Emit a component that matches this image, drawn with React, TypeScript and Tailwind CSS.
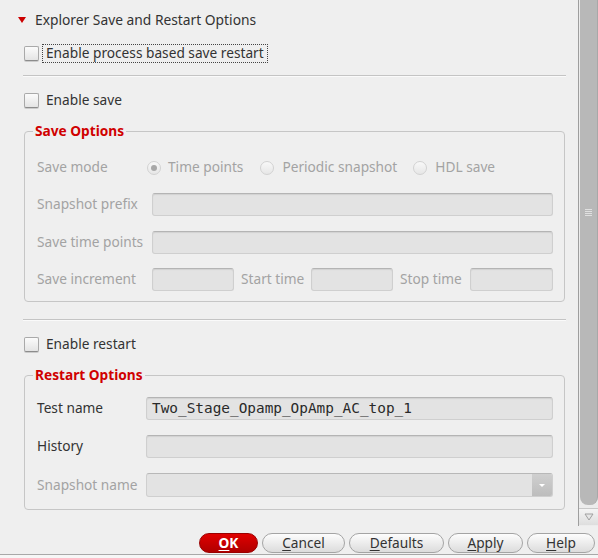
const field =
  "h-[23px] rounded-[3px] bg-[#e3e3e3] border border-[#cfcfcf] border-t-[#b4b4b4] shadow-[inset_0_1px_1px_rgba(0,0,0,0.08)]";

function CheckBox() {
  return (
    <div className="w-[15px] h-[15px] rounded-[2px] border border-[#a9a9a9] border-b-[#8c8c8c] bg-gradient-to-b from-[#fbfbfb] to-[#e4e4e4] shadow-[0_1px_0_rgba(0,0,0,0.15)] shrink-0" />
  );
}

function Radio({ checked }: { checked?: boolean }) {
  return (
    <div className="w-[14px] h-[14px] rounded-full border border-[#d2d2d2] bg-gradient-to-b from-[#f8f8f8] to-[#e6e6e6] flex items-center justify-center shrink-0">
      {checked && <div className="w-[6px] h-[6px] rounded-full bg-[#a8a8a8]" />}
    </div>
  );
}

function Btn({ label, u, primary, w }: { label: string; u: string; primary?: boolean; w: string }) {
  const rest = label.slice(1);
  return (
    <button
      className={
        primary
          ? `${w} h-[20px] rounded-full bg-gradient-to-b from-[#e00000] to-[#b00000] border border-[#9a0000] text-white font-bold text-[13.7px] leading-none`
          : `${w} h-[20px] rounded-full bg-gradient-to-b from-[#fdfdfd] to-[#dcdcdc] border border-[#a4a4a4] text-[#333] text-[13.7px] leading-none`
      }
    >
      <span className="underline underline-offset-2">{u}</span>
      {rest}
    </button>
  );
}

export default function App() {
  return (
    <div className="w-[598px] h-[558px] bg-[#efefef] flex flex-col font-['Noto_Sans',sans-serif] text-[13.7px] text-[#333] overflow-hidden">
      <div className="flex h-[526px]">
        {/* content */}
        <div className="w-[578px] flex flex-col">
          <div className="h-[40px] flex items-center pl-[18px]">
            <div className="w-0 h-0 border-l-[4px] border-r-[4px] border-t-[6px] border-l-transparent border-r-transparent border-t-[#cc0000]" />
            <span className="ml-[9px] text-[13.8px]">Explorer Save and Restart Options</span>
          </div>

          <div className="h-[26px] flex items-center pl-[24px]">
            <CheckBox />
            <span className="ml-[3px] px-[3px] h-[19px] flex items-center border border-dotted border-[#444]">
              Enable process based save restart
            </span>
          </div>

          <div className="mt-[9px] ml-[23px] w-[543px] h-[2px] border-t border-[#c4c4c4] border-b border-b-[#fafafa]" />

          <div className="h-[47px] flex items-center pl-[24px]">
            <CheckBox />
            <span className="ml-[7px]">Enable save</span>
          </div>

          <fieldset className="ml-[24px] w-[541px] border border-[#c6c6c6] rounded-[4px] pl-[12px] pr-[11px] pb-[10px]">
            <legend className="-ml-[4px] px-[2px] h-[14px] text-[#d00000] font-bold leading-[14px]">Save Options</legend>
            <div className="mt-[18px] h-[23px] flex items-center text-[#a3a3a3]">
              <span className="w-[110px]">Save mode</span>
              <Radio checked />
              <span className="ml-[7px]">Time points</span>
              <span className="ml-[17px]"><Radio /></span>
              <span className="ml-[8px]">Periodic snapshot</span>
              <span className="ml-[16px]"><Radio /></span>
              <span className="ml-[8px]">HDL save</span>
            </div>
            <div className="mt-[14px] flex items-center text-[#a3a3a3]">
              <span className="w-[115px]">Snapshot prefix</span>
              <div className={`${field} flex-1`} />
            </div>
            <div className="mt-[15px] flex items-center text-[#a3a3a3]">
              <span className="w-[115px]">Save time points</span>
              <div className={`${field} flex-1`} />
            </div>
            <div className="mt-[14px] flex items-center text-[#a3a3a3]">
              <span className="w-[115px]">Save increment</span>
              <div className={`${field} w-[82px]`} />
              <span className="w-[77px] pl-[7px]">Start time</span>
              <div className={`${field} w-[82px]`} />
              <span className="w-[77px] pl-[7px]">Stop time</span>
              <div className={`${field} flex-1`} />
            </div>
          </fieldset>

          <div className="mt-[17px] ml-[23px] w-[543px] h-[2px] border-t border-[#c4c4c4] border-b border-b-[#fafafa]" />

          <div className="h-[46px] flex items-center pl-[24px]">
            <CheckBox />
            <span className="ml-[7px]">Enable restart</span>
          </div>

          <fieldset className="ml-[24px] w-[541px] border border-[#c6c6c6] rounded-[4px] pl-[12px] pr-[11px] pb-[12px]">
            <legend className="-ml-[4px] px-[2px] h-[16px] text-[#d00000] font-bold leading-[16px]">Restart Options</legend>
            <div className="mt-[14px] flex items-center">
              <span className="w-[109px]">Test name</span>
              <div className={`${field} flex-1 flex items-center pl-[5px] font-['DejaVu_Sans_Mono',monospace] text-[14.4px] text-[#2a2a2a]`}>
                Two_Stage_Opamp_OpAmp_AC_top_1
              </div>
            </div>
            <div className="mt-[15px] flex items-center">
              <span className="w-[109px]">History</span>
              <div className={`${field} flex-1`} />
            </div>
            <div className="mt-[15px] flex items-center text-[#a3a3a3]">
              <span className="w-[109px]">Snapshot name</span>
              <div className="h-[24px] flex-1 flex rounded-[3px] bg-[#e3e3e3] border border-[#cfcfcf] border-t-[#b8b8b8]">
                <div className="flex-1" />
                <div className="w-[20px] bg-gradient-to-b from-[#cfcfcf] to-[#bdbdbd] rounded-r-[2px] flex items-center justify-center">
                  <div className="w-0 h-0 border-l-[3px] border-r-[3px] border-t-[3px] border-l-transparent border-r-transparent border-t-white" />
                </div>
              </div>
            </div>
          </fieldset>
        </div>

        {/* scrollbar */}
        <div className="w-[20px] flex flex-col border-l border-[#9e9e9e] bg-[#ececec]">
          <div className="h-[505px] ml-[1px] bg-[#b8b8b8] border-r border-[#a8a8a8] rounded-b-[8px] flex flex-col items-center pt-[209px]">
            <div className="flex flex-col gap-[1px]">
              <div className="w-[7px] h-[1px] bg-[#e0e0e0]" />
              <div className="w-[7px] h-[1px] bg-[#e0e0e0]" />
              <div className="w-[7px] h-[1px] bg-[#e0e0e0]" />
              <div className="w-[7px] h-[1px] bg-[#e0e0e0]" />
            </div>
          </div>
          <div className="mt-[3px] h-[17px] bg-gradient-to-b from-[#f4f4f4] to-[#dedede] border-t border-[#c8c8c8] flex items-center justify-center">
            <svg width="10" height="8" viewBox="0 0 10 8">
              <path d="M1 1 L9 1 L5 7 Z" fill="#e6e6e6" stroke="#a0a0a0" strokeWidth="1" />
            </svg>
          </div>
        </div>
      </div>

      <div className="h-[29px] flex items-start justify-end gap-[4px] pr-[3px] pt-[7px] border-b border-[#a8a8a8]">
        <Btn label="OK" u="O" primary w="w-[59px]" />
        <Btn label="Cancel" u="C" w="w-[83px]" />
        <Btn label="Defaults" u="D" w="w-[95px]" />
        <Btn label="Apply" u="A" w="w-[75px]" />
        <Btn label="Help" u="H" w="w-[68px]" />
      </div>
      <div className="h-[3px] bg-[#f6f6f6]" />
    </div>
  );
}
